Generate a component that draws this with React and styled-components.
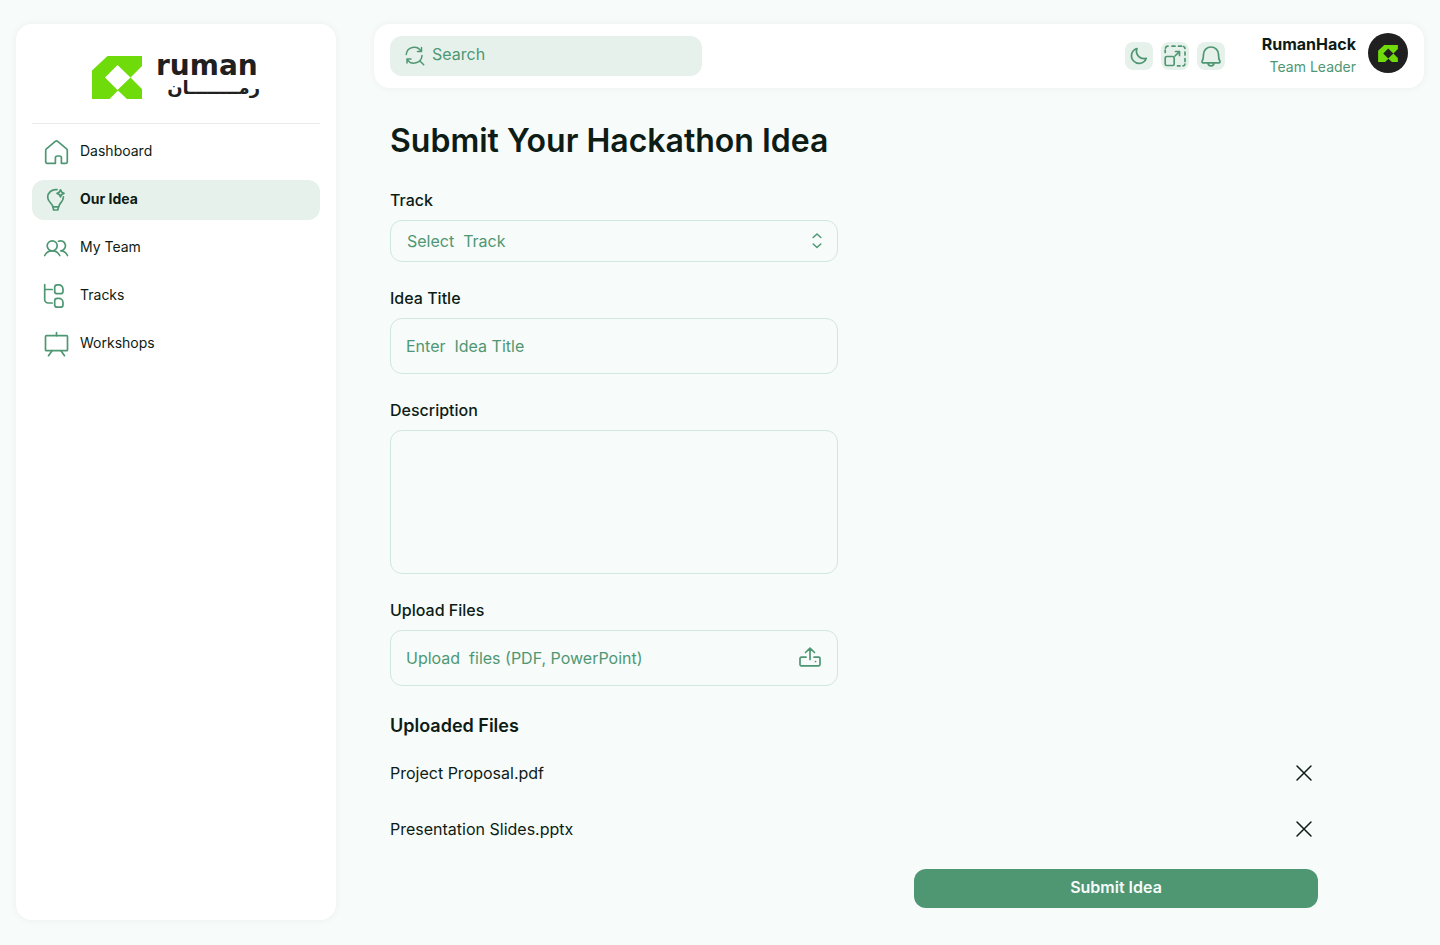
import React from "react";
import styled, { createGlobalStyle, ThemeProvider } from "styled-components";

const theme = {
  page: "#f7fbfa",
  surface: "#ffffff",
  tint: "#e7f1eb",
  green: "#4f9773",
  border: "#d0e8dc",
  ink: "#0d1c15",
  lime: "#6fdb0b",
  dark: "#202020",
};

const GlobalStyle = createGlobalStyle`
  *, *::before, *::after { box-sizing: border-box; }
  body {
    margin: 0;
    background: ${theme.page};
    color: ${theme.ink};
    font-family: Inter, "Liberation Sans", sans-serif;
    font-size: 16px;
    line-height: 24px;
  }
  button, input, select, textarea { font: inherit; color: inherit; }
`;

const Page = styled.div`
  display: flex;
  gap: 38px;
  min-height: 100vh;
  padding: 24px 16px 25px;
`;

const Sidebar = styled.aside`
  flex: 0 0 320px;
  padding: 0 16px;
  border-radius: 16px;
  background: ${({ theme }) => theme.surface};
  box-shadow: 0 0 8px rgba(13, 60, 40, 0.05);
`;

const Brand = styled.a`
  display: flex;
  align-items: center;
  justify-content: center;
  gap: 14px;
  height: 100px;
  padding-top: 8px;
  border-bottom: 1px solid #e6ebe9;
  color: ${({ theme }) => theme.dark};
  text-decoration: none;
`;

const Wordmark = styled.span`
  display: flex;
  flex-direction: column;
  width: 104px;
  font-family: "DejaVu Sans", sans-serif;
  font-weight: 700;
  white-space: nowrap;
`;

const LatinName = styled.span`
  font-size: 28px;
  line-height: 20px;
`;

const ArabicName = styled.span`
  font-size: 18px;
  line-height: 24px;
  text-align: right;
`;

const NavList = styled.ul`
  display: flex;
  flex-direction: column;
  gap: 8px;
  margin: 8px 0 0;
  padding: 0;
  list-style: none;
`;

const NavLink = styled.a`
  display: flex;
  align-items: center;
  gap: 12px;
  height: 40px;
  padding: 0 12px;
  border-radius: 12px;
  background: ${({ theme, $active }) => ($active ? theme.tint : "transparent")};
  color: ${({ theme }) => theme.ink};
  font-size: 14px;
  line-height: 20px;
  font-weight: ${({ $active }) => ($active ? 700 : 400)};
  text-decoration: none;

  span { padding-bottom: 2px; }
`;

const Icon = styled.svg`
  flex: none;
  display: block;
  width: 24px;
  height: 24px;
  overflow: visible;
  fill: none;
  stroke: ${({ theme, $ink }) => ($ink ? theme.ink : theme.green)};
  stroke-width: ${({ $weight = 1.5 }) => $weight};
  stroke-linecap: round;
  stroke-linejoin: round;
`;

const Main = styled.div`
  flex: 1;
  min-width: 0;
`;

const Header = styled.header`
  display: flex;
  align-items: center;
  height: 64px;
  padding: 0 16px;
  border-radius: 16px;
  background: ${({ theme }) => theme.surface};
  box-shadow: 0 0 8px rgba(13, 60, 40, 0.05);
`;

const SearchBox = styled.label`
  display: flex;
  align-items: center;
  gap: 6px;
  width: 312px;
  height: 40px;
  padding: 0 12px 2px;
  border-radius: 12px;
  background: ${({ theme }) => theme.tint};
`;

const SearchInput = styled.input`
  flex: 1;
  min-width: 0;
  height: 36px;
  padding: 0 0 2px;
  border: 0;
  outline: 0;
  background: transparent;

  &::placeholder { color: ${({ theme }) => theme.green}; opacity: 1; }
`;

const Tools = styled.div`
  display: flex;
  gap: 8px;
  margin-left: auto;
`;

const ToolButton = styled.button`
  display: grid;
  place-items: center;
  width: 28px;
  height: 28px;
  padding: 0;
  border: 0;
  border-radius: 8px;
  background: ${({ theme }) => theme.tint};
  cursor: pointer;
`;

const User = styled.div`
  display: flex;
  align-items: center;
  gap: 12px;
  height: 58px;
  margin-left: 37px;
  align-self: flex-start;
`;

const UserText = styled.div`
  display: flex;
  flex-direction: column;
  padding-top: 4px;
  text-align: right;
`;

const UserName = styled.strong`
  font-size: 16px;
  line-height: 24px;
  font-weight: 700;
`;

const UserRole = styled.span`
  color: ${({ theme }) => theme.green};
  font-size: 14px;
  line-height: 22px;
`;

const Avatar = styled.span`
  display: grid;
  place-items: center;
  width: 40px;
  height: 40px;
  border-radius: 50%;
  background: ${({ theme }) => theme.dark};
`;

const Content = styled.main`
  max-width: 960px;
  padding: 32px 16px 0;
`;

const Title = styled.h1`
  margin: 0 0 26px;
  font-size: 32px;
  line-height: 42px;
  font-weight: 600;
`;

const Fields = styled.div`
  display: flex;
  flex-direction: column;
  gap: 24px;
  max-width: 448px;
`;

const Field = styled.div`
  display: flex;
  flex-direction: column;
  gap: 8px;
`;

const FieldLabel = styled.label`
  font-weight: 500;
`;

const SelectWrap = styled.div`
  position: relative;
  display: flex;

  svg {
    position: absolute;
    right: 9px;
    top: 9px;
    pointer-events: none;
  }
`;

const Select = styled.select`
  width: 100%;
  height: 42px;
  padding: 0 40px 0 16px;
  border: 1px solid ${({ theme }) => theme.border};
  border-radius: 12px;
  background: transparent;
  color: ${({ theme }) => theme.green};
  appearance: none;
`;

const TextInput = styled.input`
  height: 56px;
  padding: 0 15px;
  border: 1px solid ${({ theme }) => theme.border};
  border-radius: 12px;
  background: transparent;

  &::placeholder { color: ${({ theme }) => theme.green}; opacity: 1; }
`;

const TextArea = styled.textarea`
  height: 144px;
  padding: 15px;
  border: 1px solid ${({ theme }) => theme.border};
  border-radius: 12px;
  background: transparent;
  resize: none;
`;

const UploadBox = styled.label`
  display: flex;
  align-items: center;
  justify-content: space-between;
  height: 56px;
  padding: 0 15px;
  border: 1px solid ${({ theme }) => theme.border};
  border-radius: 12px;
  color: ${({ theme }) => theme.green};
  cursor: pointer;
`;

const HiddenFileInput = styled.input`
  position: absolute;
  width: 1px;
  height: 1px;
  opacity: 0;
`;

const SectionTitle = styled.h2`
  margin: 28px 0 7px;
  font-size: 18px;
  line-height: 24px;
  font-weight: 600;
`;

const FileList = styled.ul`
  margin: 0;
  padding: 0;
  list-style: none;
`;

const FileRow = styled.li`
  display: flex;
  align-items: center;
  justify-content: space-between;
  height: 56px;
`;

const RemoveButton = styled.button`
  display: grid;
  place-items: center;
  width: 28px;
  height: 28px;
  padding: 0;
  border: 0;
  background: transparent;
  cursor: pointer;
`;

const SubmitButton = styled.button`
  display: block;
  width: 404px;
  max-width: 100%;
  height: 39px;
  margin: 12px 0 0 auto;
  padding: 0 0 4px;
  border: 0;
  border-radius: 12px;
  background: ${({ theme }) => theme.green};
  color: ${({ theme }) => theme.page};
  font-weight: 600;
  cursor: pointer;
`;

const navItems = [
  {
    label: "Dashboard",
    icon: (
      <path d="M1.7 10.4a2 2 0 0 1 .7-1.5l8.9-7.5a1.8 1.8 0 0 1 2.4 0l8.900 7.500a2 2 0 0 1 .7 1.500V22a1.300 1.300 0 0 1-1.300 1.300h-4.600V18a2 2 0 0 0-2-2h-2a2 2 0 0 0-2 2v5.300H3A1.300 1.300 0 0 1 1.700 22z" />
    ),
  },
  {
    label: "Our Idea",
    active: true,
    icon: (
      <>
        <path d="M13 1.7C7.8 1 3.7 4.7 3.7 9.3c0 4.8 4.4 5.500 5.200 9.500h5.700c.7-4 4.800-5 4.800-9.900" />
        <path d="M8.900 18.800 9.600 22h4.200l.8-3.200" />
        <path d="M16.500 1.800c.5 2.300 1.200 3 3.500 3.500-2.300.5-3 1.200-3.500 3.500-.5-2.300-1.200-3-3.500-3.500 2.300-.5 3-1.200 3.500-3.500z" />
      </>
    ),
  },
  {
    label: "My Team",
    icon: (
      <>
        <circle cx="8.200" cy="9.800" r="5" />
        <path d="M.7 19.500c1.500-3.200 4.200-4.700 7.500-4.700s6 1.500 7.500 4.700" />
        <path d="M14.500 5.200a5 5 0 1 1 2.200 9.600c3 0 5.300 1.600 6.800 4.700" />
      </>
    ),
  },
  {
    label: "Tracks",
    icon: (
      <>
        <path d="M.7.7v14.800A3.500 3.500 0 0 0 4.200 19h4M.7 5.500h7.500" />
        <path d="M13.200.8h1.600A4.200 4.200 0 0 1 19 5v2.200a2.500 2.500 0 0 1-2.500 2.500h-3.300a2.500 2.500 0 0 1-2.500-2.500V3.300A2.500 2.500 0 0 1 13.200.8z" />
        <path d="M13.200 14.300h1.600a4.200 4.200 0 0 1 4.200 4.200v2.200a2.500 2.500 0 0 1-2.500 2.500h-3.300a2.500 2.500 0 0 1-2.500-2.500v-3.900a2.500 2.500 0 0 1 2.500-2.500z" />
      </>
    ),
  },
  {
    label: "Workshops",
    icon: (
      <>
        <rect x="1.500" y="3.700" width="22" height="15" rx="1" />
        <path d="M12.500.7v3M8 18.700l-3.500 5M17 18.700l3.500 5" />
      </>
    ),
  },
];

const files = ["Project Proposal.pdf", "Presentation Slides.pptx"];

function BrandMark({ width, height }) {
  return (
    <svg width={width} height={height} viewBox="0 0 50 43" aria-hidden="true">
      <path
        fill={theme.lime}
        fillRule="evenodd"
        d="M15.500 0H50V10L38.500 21.500 50 33V43H35L26 34.500 17.500 43H0V14.500zM25.500 9 13 21.500 25.500 34 38.500 21.500z"
      />
    </svg>
  );
}

export default function App() {
  return (
    <ThemeProvider theme={theme}>
      <GlobalStyle />
      <Page>
        <Sidebar>
          <Brand href="#home">
            <BrandMark width={50} height={43} />
            <Wordmark>
              <LatinName>ruman</LatinName>
              <ArabicName lang="ar" dir="rtl">رمــــــــان</ArabicName>
            </Wordmark>
          </Brand>
          <nav>
            <NavList>
              {navItems.map(({ label, icon, active }) => (
                <li key={label}>
                  <NavLink href="#nav" $active={active} aria-current={active ? "page" : undefined}>
                    <Icon $weight={1.7} viewBox="0 0 24 24" aria-hidden="true">{icon}</Icon>
                    <span>{label}</span>
                  </NavLink>
                </li>
              ))}
            </NavList>
          </nav>
        </Sidebar>
        <Main>
          <Header>
            <SearchBox>
              <Icon viewBox="0 0 24 24" aria-hidden="true">
                <path d="M19.500 4.500v4h-4M19 8.300a8 8 0 0 0-14.800 3.200M5 20v-4h4M5.200 16.300A8 8 0 0 0 20 12.500M17.700 17.700l4 4" />
              </Icon>
              <SearchInput type="search" placeholder="Search" aria-label="Search" />
            </SearchBox>
            <Tools>
              <ToolButton type="button" aria-label="Dark mode">
                <Icon $weight={1.7} viewBox="0 0 24 24" aria-hidden="true">
                  <path d="M10 4.500a7.500 7.500 0 0 0 9.300 9.800A7.600 7.600 0 1 1 10 4.500z" />
                </Icon>
              </ToolButton>
              <ToolButton type="button" aria-label="Full screen">
                <Icon $weight={1.7} viewBox="0 0 24 24" aria-hidden="true">
                  <rect x="2.200" y="12.500" width="9" height="9" rx="1.500" />
                  <path d="m12 12 4.500-4.500M12.500 7.500h4v4M2.200 8.500V6M2.500 4.200A2.500 2.500 0 0 1 5 2.200M9 2.200h3M15.500 2.200h3M20.500 2.500a2 2 0 0 1 1.500 2M22 8v3M22 14.500v3M22 20a2 2 0 0 1-2 1.800M14.500 21.800h2.500" />
                </Icon>
              </ToolButton>
              <ToolButton type="button" aria-label="Notifications">
                <Icon $weight={1.7} viewBox="0 0 24 24" aria-hidden="true">
                  <path d="M4 18.800a1 1 0 0 1-.9-1.500C4.500 15 4.500 13 4.500 10.500a7.500 7.500 0 0 1 15 0c0 2.500 0 4.500 1.400 6.800a1 1 0 0 1-.9 1.500zM9 19a3 2.800 0 0 0 6 0" />
                </Icon>
              </ToolButton>
            </Tools>
            <User>
              <UserText>
                <UserName>RumanHack</UserName>
                <UserRole>Team Leader</UserRole>
              </UserText>
              <Avatar>
                <BrandMark width={20} height={17} />
              </Avatar>
            </User>
          </Header>
          <Content>
            <Title>Submit Your Hackathon Idea</Title>
            <form onSubmit={(event) => event.preventDefault()}>
              <Fields>
                <Field>
                  <FieldLabel htmlFor="track">Track</FieldLabel>
                  <SelectWrap>
                    <Select id="track" defaultValue="">
                      <option value="">{"Select\u00a0 Track"}</option>
                    </Select>
                    <Icon viewBox="0 0 24 24" aria-hidden="true">
                      <path d="m8.200 8.500 3.800-3.500 3.800 3.500M8.200 15l3.800 3.500 3.800-3.500" />
                    </Icon>
                  </SelectWrap>
                </Field>
                <Field>
                  <FieldLabel htmlFor="idea-title">Idea Title</FieldLabel>
                  <TextInput id="idea-title" type="text" placeholder={"Enter\u00a0 Idea Title"} />
                </Field>
                <Field>
                  <FieldLabel htmlFor="description">Description</FieldLabel>
                  <TextArea id="description" />
                </Field>
                <Field>
                  <FieldLabel htmlFor="upload">Upload Files</FieldLabel>
                  <UploadBox>
                    <span>{"Upload\u00a0 files (PDF, PowerPoint)"}</span>
                    <HiddenFileInput id="upload" type="file" accept=".pdf,.pptx" />
                    <Icon $weight={1.7} viewBox="0 0 24 24" aria-hidden="true">
                      <path d="M12 13.500V2.500M7.500 6.500 12 2.200l4.500 4.300M8 11.200H3.300A1.300 1.300 0 0 0 2 12.500v6a1.300 1.300 0 0 0 1.300 1.300h17.400a1.300 1.300 0 0 0 1.300-1.300v-6a1.300 1.300 0 0 0-1.300-1.300H16M17.500 15.500h.1" />
                    </Icon>
                  </UploadBox>
                </Field>
              </Fields>
              <SectionTitle>Uploaded Files</SectionTitle>
              <FileList>
                {files.map((name) => (
                  <FileRow key={name}>
                    <span>{name}</span>
                    <RemoveButton type="button" aria-label={`Remove ${name}`}>
                      <Icon $ink viewBox="0 0 24 24" aria-hidden="true">
                        <path d="m5 5 14 14M19 5 5 19" />
                      </Icon>
                    </RemoveButton>
                  </FileRow>
                ))}
              </FileList>
              <SubmitButton type="submit">Submit Idea</SubmitButton>
            </form>
          </Content>
        </Main>
      </Page>
    </ThemeProvider>
  );
}
